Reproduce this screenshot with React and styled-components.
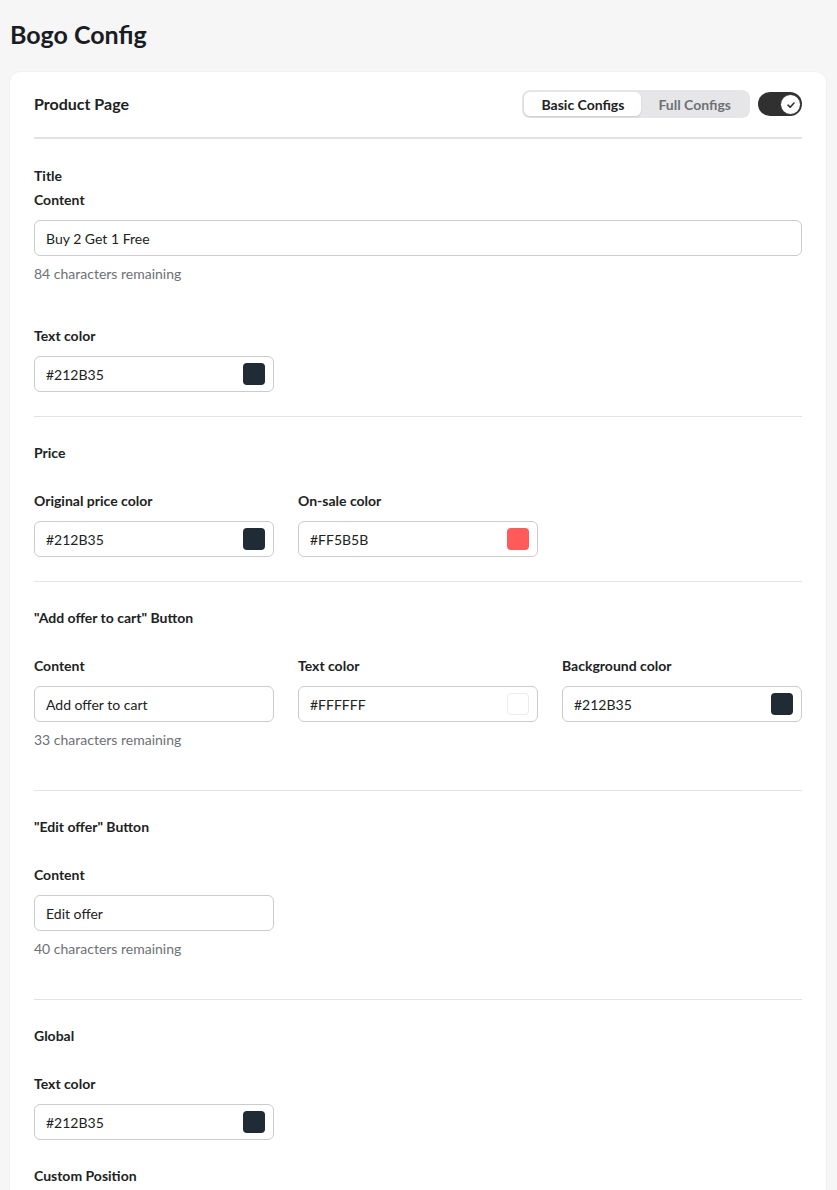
import React from "react";
import styled, { createGlobalStyle } from "styled-components";

const Global = createGlobalStyle`
  html, body { margin: 0; padding: 0; background: #f6f6f7; }
  body { font-family: Lato, "Noto Sans", "Liberation Sans", sans-serif; color: #202223; }
  * { box-sizing: border-box; }
`;

const Page = styled.div`
  padding: 18px 11px 40px 10px;
`;

const PageTitle = styled.h1`
  margin: 0 0 22px;
  font-size: 25px;
  line-height: 32px;
  font-weight: 700;
  color: #1a1c24;
`;

const Card = styled.div`
  background: #fff;
  border-radius: 10px;
  padding: 18px 24px 0;
  box-shadow: 0 0 0 1px rgba(0, 0, 0, 0.02);
`;

const Header = styled.div`
  display: flex;
  align-items: center;
  justify-content: space-between;
  padding-bottom: 19px;
  border-bottom: 2px solid #e3e3e3;
`;

const CardTitle = styled.h2`
  margin: 0;
  font-size: 16px;
  line-height: 28px;
  font-weight: 700;
`;

const HeaderControls = styled.div`
  display: flex;
  align-items: center;
  gap: 8px;
`;

const Segmented = styled.div`
  display: flex;
  padding: 2px;
  border-radius: 8px;
  background: #e6e6e9;
  height: 28px;
`;

const SegButton = styled.button`
  border: 0;
  font: inherit;
  font-size: 14px;
  font-weight: 700;
  padding: 0 17px;
  height: 24px;
  border-radius: 6px;
  cursor: pointer;
  background: ${(p) => (p.$active ? "#fff" : "transparent")};
  color: ${(p) => (p.$active ? "#202223" : "#6d7175")};
  box-shadow: ${(p) => (p.$active ? "0 1px 2px rgba(0,0,0,0.12)" : "none")};
`;

const Switch = styled.div`
  position: relative;
  width: 44px;
  height: 24px;
  border-radius: 12px;
  background: #303030;
`;

const Knob = styled.div`
  position: absolute;
  top: 2px;
  right: 1px;
  width: 21px;
  height: 21px;
  border-radius: 50%;
  background: #fff;
  border: 1.5px solid #303030;
  display: flex;
  align-items: center;
  justify-content: center;
`;

const Section = styled.section`
  padding: ${(p) => (p.$first ? "27px" : "26px")} 0 24px;
  border-bottom: ${(p) => (p.$last ? "0" : "1px solid #e3e3e3")};
  display: flex;
  flex-direction: column;
  gap: 26px;
`;

const SectionBody = styled.div`
  display: flex;
  flex-direction: column;
`;

const SectionTitle = styled.h3`
  margin: 0 0 ${(p) => p.$gap}px;
  font-size: 14px;
  line-height: 20px;
  font-weight: 700;
`;

const Row = styled.div`
  display: grid;
  grid-template-columns: repeat(3, 240px);
  column-gap: 24px;
`;

const Field = styled.div`
  display: flex;
  flex-direction: column;
  grid-column: ${(p) => (p.$wide ? "1 / -1" : "auto")};
`;

const Label = styled.label`
  font-size: 14px;
  line-height: 20px;
  font-weight: 700;
  margin-bottom: 10px;
`;

const InputBox = styled.div`
  display: flex;
  align-items: center;
  height: 36px;
  border: 1px solid #c9cccf;
  border-radius: 6px;
  padding: 0 8px 0 11px;
  background: #fff;
`;

const Input = styled.input`
  flex: 1;
  min-width: 0;
  border: 0;
  outline: none;
  font: inherit;
  font-size: 14px;
  color: #202223;
  background: transparent;
  padding: 0;
`;

const Swatch = styled.span`
  width: 22px;
  height: 22px;
  border-radius: 4px;
  background: ${(p) => p.$color};
  border: ${(p) => (p.$color === "#FFFFFF" ? "1px solid #ececec" : "none")};
  flex-shrink: 0;
`;

const Helper = styled.div`
  margin: 8px 0 16px;
  font-size: 14px;
  line-height: 20px;
  color: #6d7175;
`;

function TextField({ label, value, remaining, wide }) {
  return (
    <Field $wide={wide}>
      <Label>{label}</Label>
      <InputBox>
        <Input defaultValue={value} />
      </InputBox>
      {remaining != null && <Helper>{remaining} characters remaining</Helper>}
    </Field>
  );
}

function ColorField({ label, value }) {
  return (
    <Field>
      <Label>{label}</Label>
      <InputBox>
        <Input defaultValue={value} />
        <Swatch $color={value} />
      </InputBox>
    </Field>
  );
}

export default function App() {
  return (
    <>
      <Global />
      <Page>
        <PageTitle>Bogo Config</PageTitle>
        <Card>
          <Header>
            <CardTitle>Product Page</CardTitle>
            <HeaderControls>
              <Segmented>
                <SegButton $active>Basic Configs</SegButton>
                <SegButton>Full Configs</SegButton>
              </Segmented>
              <Switch>
                <Knob>
                  <svg width="10" height="10" viewBox="0 0 10 10">
                    <path d="M2 5.2 L4.2 7.2 L8 3" fill="none" stroke="#303030" strokeWidth="1.6" strokeLinecap="round" strokeLinejoin="round" />
                  </svg>
                </Knob>
              </Switch>
            </HeaderControls>
          </Header>

          <Section $first>
            <SectionBody>
              <SectionTitle $gap={4}>Title</SectionTitle>
              <Row>
                <TextField wide label="Content" value="Buy 2 Get 1 Free" remaining={84} />
              </Row>
            </SectionBody>
            <Row>
              <ColorField label="Text color" value="#212B35" />
            </Row>
          </Section>

          <Section>
            <SectionBody>
              <SectionTitle $gap={28}>Price</SectionTitle>
              <Row>
                <ColorField label="Original price color" value="#212B35" />
                <ColorField label="On-sale color" value="#FF5B5B" />
              </Row>
            </SectionBody>
          </Section>

          <Section>
            <SectionBody>
              <SectionTitle $gap={28}>"Add offer to cart" Button</SectionTitle>
              <Row>
                <TextField label="Content" value="Add offer to cart" remaining={33} />
                <ColorField label="Text color" value="#FFFFFF" />
                <ColorField label="Background color" value="#212B35" />
              </Row>
            </SectionBody>
          </Section>

          <Section>
            <SectionBody>
              <SectionTitle $gap={28}>"Edit offer" Button</SectionTitle>
              <Row>
                <TextField label="Content" value="Edit offer" remaining={40} />
              </Row>
            </SectionBody>
          </Section>

          <Section $last>
            <SectionBody>
              <SectionTitle $gap={28}>Global</SectionTitle>
              <Row>
                <ColorField label="Text color" value="#212B35" />
              </Row>
            </SectionBody>
            <SectionTitle $gap={0}>Custom Position</SectionTitle>
          </Section>
        </Card>
      </Page>
    </>
  );
}
